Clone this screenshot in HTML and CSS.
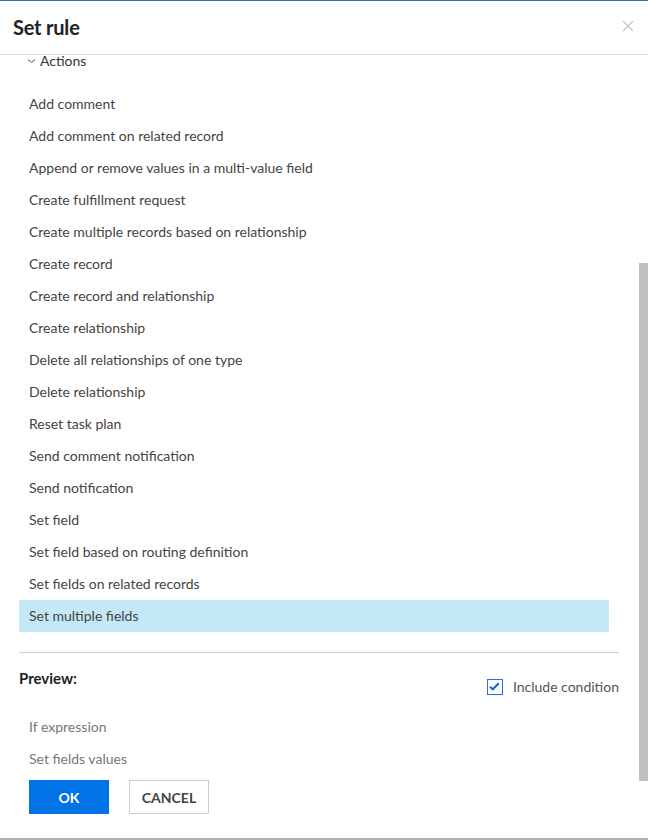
FILE: index.html
```html
<!DOCTYPE html>
<html>
<head>
<meta charset="utf-8">
<link rel="stylesheet" href="styles.css">
</head>
<body>
<div class="dialog">
  <header class="head">
    <h1 class="title">Set rule</h1>
    <span class="close" aria-label="Close">
      <svg width="12" height="12" viewBox="0 0 12 12"><path d="M1 1L11 11M11 1L1 11" stroke="#c4c4c4" stroke-width="1.3" fill="none"/></svg>
    </span>
  </header>
  <div class="body">
    <div class="group">
      <svg class="chev" width="9" height="6" viewBox="0 0 9 6"><path d="M1 1.5L4.5 4.5L8 1.5" stroke="#555" stroke-width="1" fill="none"/></svg>
      <span>Actions</span>
    </div>
    <ul class="list">
      <li>Add comment</li>
      <li>Add comment on related record</li>
      <li>Append or remove values in a multi-value field</li>
      <li>Create fulfillment request</li>
      <li>Create multiple records based on relationship</li>
      <li>Create record</li>
      <li>Create record and relationship</li>
      <li>Create relationship</li>
      <li>Delete all relationships of one type</li>
      <li>Delete relationship</li>
      <li>Reset task plan</li>
      <li>Send comment notification</li>
      <li>Send notification</li>
      <li>Set field</li>
      <li>Set field based on routing definition</li>
      <li>Set fields on related records</li>
      <li class="selected">Set multiple fields</li>
    </ul>
    <hr class="divider">
    <div class="preview-head">
      <span class="preview-label">Preview:</span>
      <label class="check">
        <span class="box"><svg width="11" height="9" viewBox="0 0 11 9"><path d="M1 4.8L3.8 7.3L9.8 1.2" stroke="#1a5fd0" stroke-width="2" fill="none"/></svg></span>
        <span>Include condition</span>
      </label>
    </div>
    <div class="preview-lines">
      <div class="preview-line">If expression</div>
      <div class="preview-line">Set fields values</div>
    </div>
    <div class="buttons">
      <button class="btn ok">OK</button>
      <button class="btn cancel">CANCEL</button>
    </div>
  </div>
  <div class="scrollthumb"></div>
</div>
</body>
</html>
```
FILE: styles.css
```css
* { box-sizing: border-box; }
html, body { margin: 0; padding: 0; }
body {
  width: 648px;
  height: 840px;
  background: #fff;
  font-family: Lato, "Liberation Sans", sans-serif;
  color: #444;
  overflow: hidden;
}
.dialog {
  position: relative;
  width: 648px;
  height: 840px;
  border-top: 1px solid #3b6ea8;
  border-bottom: 2px solid #b0b0b0;
}
.head {
  height: 54px;
  border-bottom: 1px solid #dedede;
  display: flex;
  align-items: center;
  justify-content: space-between;
  padding: 0 14px 0 13px;
}
.title {
  margin: 0;
  font-size: 20px;
  font-weight: 700;
  color: #222;
  letter-spacing: -0.2px;
  padding-bottom: 2px;
}
.close { display: flex; padding-bottom: 4px; }
.body {
  padding: 0 29px 0 19px;
}
.group {
  display: flex;
  align-items: center;
  gap: 4px;
  height: 14px;
  margin-top: -2px;
  padding-left: 8px;
  font-size: 14px;
  color: #333;
}
.chev { margin-top: 2px; }
.list {
  list-style: none;
  margin: 21px 0 0 0;
  padding: 0 10px 0 0;
}
.list li {
  height: 32px;
  line-height: 32px;
  padding-left: 10px;
  font-size: 14px;
  color: #444;
}
.list li.selected { background: #c5e8f7; }
.divider {
  border: 0;
  border-top: 1px solid #cfcfcf;
  margin: 20px 0 0 0;
}
.preview-head {
  display: flex;
  justify-content: space-between;
  align-items: flex-start;
  margin-top: 16px;
}
.preview-label {
  font-weight: 700;
  font-size: 15px;
  color: #222;
}
.check {
  display: flex;
  align-items: center;
  gap: 10px;
  margin-top: 9px;
  font-size: 14px;
  color: #555;
}
.box {
  width: 16px;
  height: 16px;
  border: 1.5px solid #1a73e8;
  display: flex;
  align-items: center;
  justify-content: center;
}
.preview-lines { margin-top: 16px; }
.preview-line {
  height: 32px;
  line-height: 32px;
  padding-left: 10px;
  font-size: 14px;
  color: #777;
}
.buttons {
  display: flex;
  gap: 20px;
  padding-left: 10px;
  margin-top: 5px;
}
.btn {
  width: 80px;
  height: 34px;
  font-family: Lato, "Liberation Sans", sans-serif;
  font-size: 14px;
  font-weight: 700;
  border: 1px solid #ccc;
  background: #fff;
  color: #444;
  padding: 0;
}
.btn.ok {
  background: #0073e7;
  border-color: #0073e7;
  color: #fff;
}
.scrollthumb {
  position: absolute;
  right: 0;
  top: 262px;
  width: 9px;
  height: 518px;
  background: #c1c1c1;
}
```
